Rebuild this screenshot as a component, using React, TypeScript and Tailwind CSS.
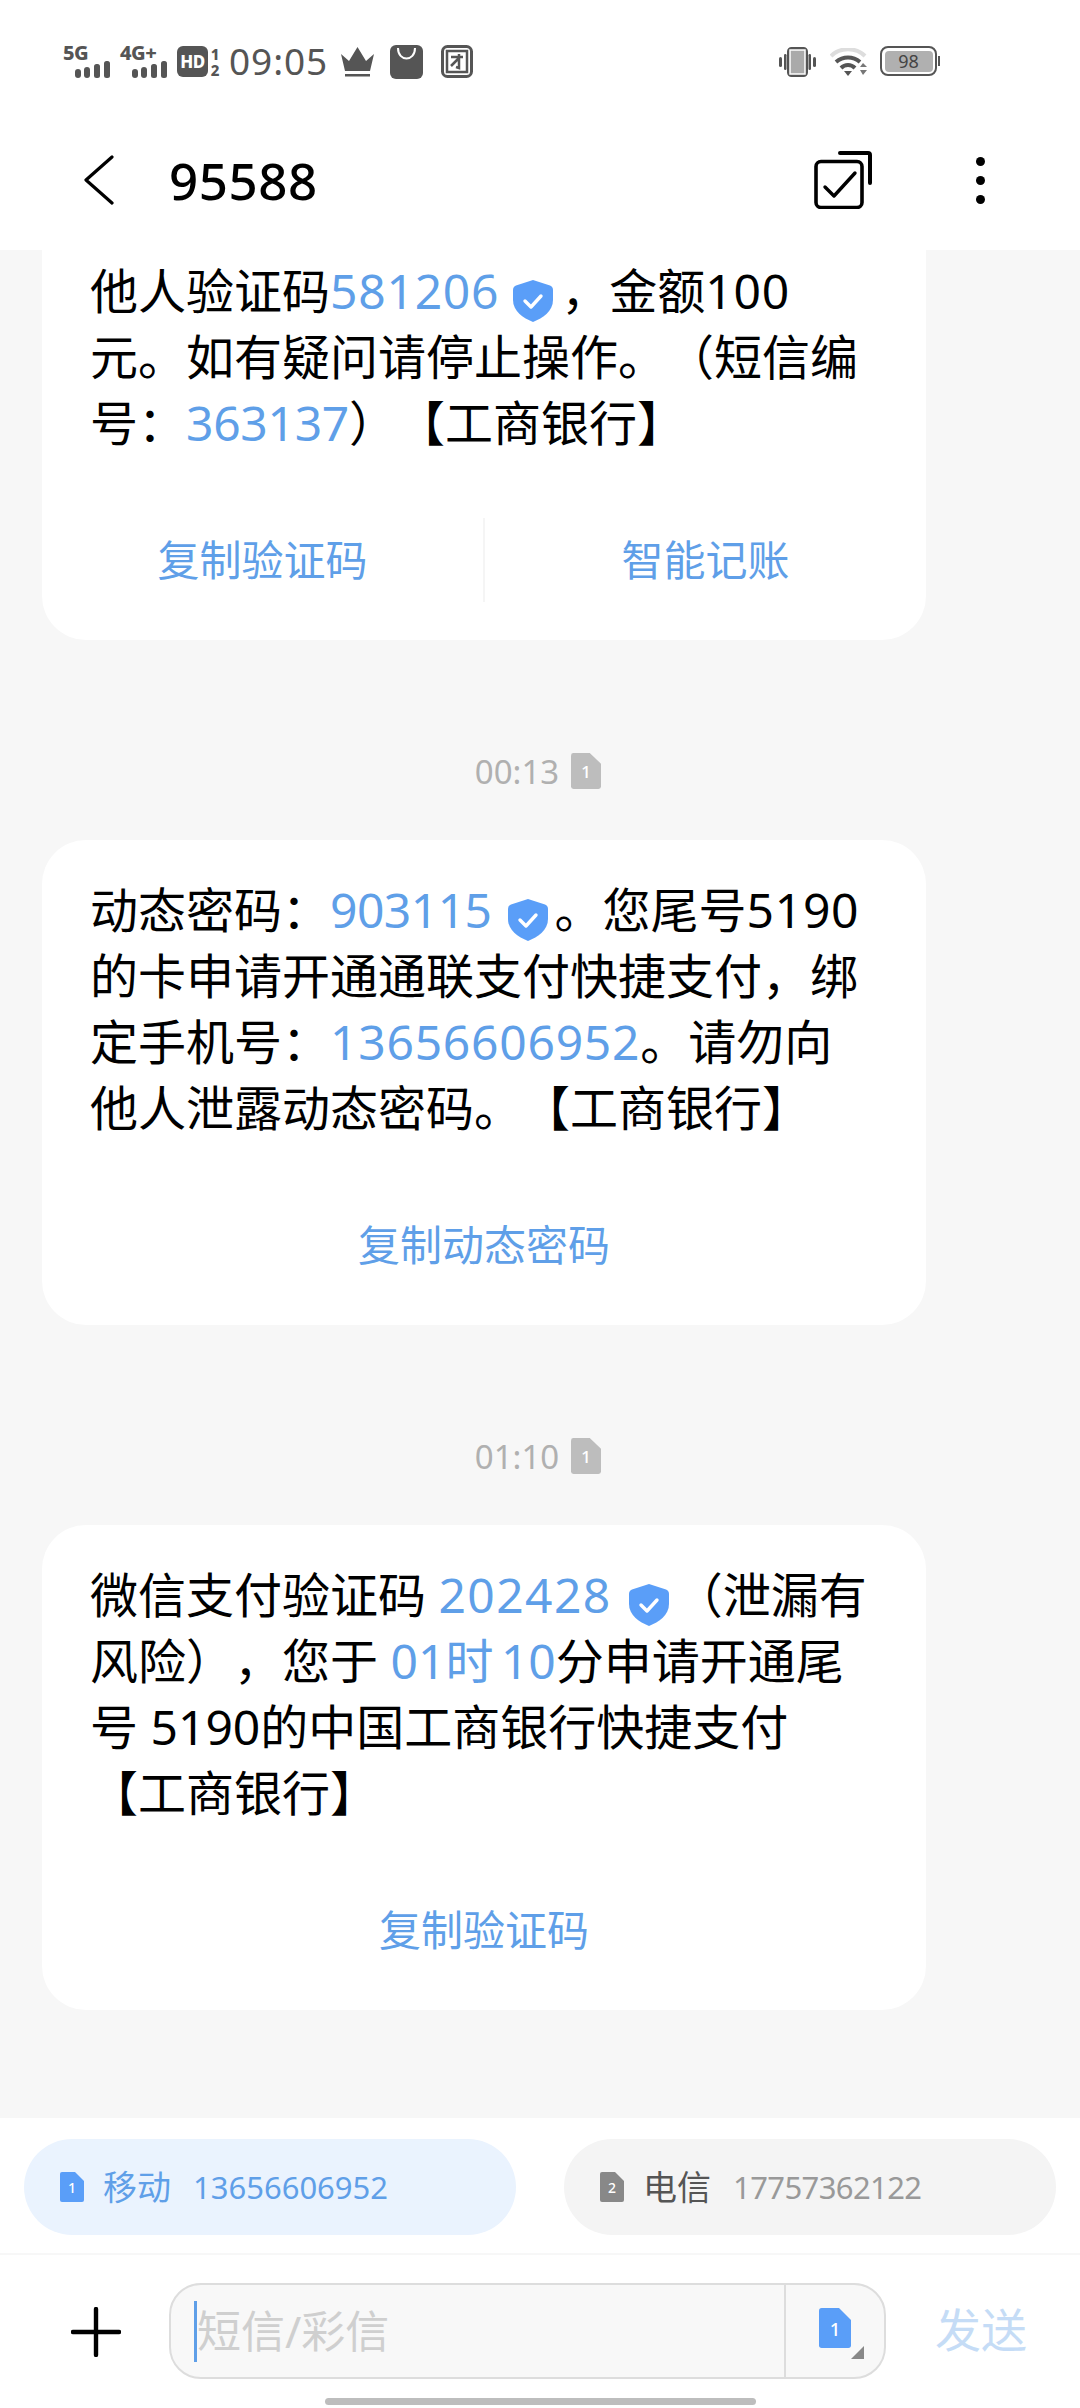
import type { ReactNode } from "react";

const BLUE_TEXT = "text-[#5f9fe8]";

function Blue({ children, className = "tracking-[0.75px]" }: { children: ReactNode; className?: string }) {
  return <span className={`${className} ${BLUE_TEXT}`}>{children}</span>;
}

function Num({ children }: { children: ReactNode }) {
  return <span className="tracking-[0.75px]">{children}</span>;
}

function Shield({ className = "mr-[6px] ml-[17px]" }: { className?: string }) {
  return (
    <svg viewBox="0 0 40 42" className={`inline-block h-[42px] w-[40px] align-[-13px] ${className}`}>
      <path
        d="M20 0 L37 5.5 Q40 6.5 40 10 V20 C40 31 30 38 20 42 C10 38 0 31 0 20 V10 Q0 6.5 3 5.5 Z"
        fill="#5a9ef8"
      />
      <path d="M12 21 L18 27 L28 16" fill="none" stroke="#fff" strokeWidth="3.4" strokeLinecap="round" strokeLinejoin="round" />
    </svg>
  );
}

function SimIcon({ n, color, className }: { n: string; color: string; className: string }) {
  return (
    <svg viewBox="0 0 24 30" preserveAspectRatio="none" className={className}>
      <path d="M2 0 H15 L24 9 V28 Q24 30 22 30 H2 Q0 30 0 28 V2 Q0 0 2 0 Z" fill={color} />
      <text x="12" y="21" textAnchor="middle" fontSize="14" fontWeight="500" fill="#fff" fontFamily="Noto Sans, sans-serif">
        {n}
      </text>
    </svg>
  );
}

function SignalBars() {
  return (
    <svg viewBox="0 0 35 17" className="h-[17px] w-[35px]">
      <rect x="0" y="8" width="6" height="9" rx="3" fill="#555" />
      <rect x="9" y="6" width="6" height="11" rx="3" fill="#555" />
      <rect x="19" y="3" width="6" height="14" rx="2.5" fill="#555" />
      <rect x="29" y="0" width="6" height="17" rx="2.5" fill="#555" />
    </svg>
  );
}

function Signal({ label, width }: { label: string; width: string }) {
  return (
    <div className={`flex flex-col ${width}`}>
      <span className="h-[17px] text-[20px] leading-[17px] font-extrabold tracking-[-0.5px] text-[#555]">{label}</span>
      <div className="ml-auto">
        <SignalBars />
      </div>
    </div>
  );
}

function StatusBar() {
  return (
    <div className="flex h-[110px] items-start justify-between pt-[44px] pr-[140px] pl-[63px]">
      <div className="flex items-start">
        <Signal label="5G" width="w-[47px]" />
        <div className="ml-[10px]">
          <Signal label="4G+" width="w-[47px]" />
        </div>
        <div className="mt-[2px] ml-[10px] flex h-[31px] w-[31px] items-center justify-center rounded-[6px] bg-[#555] text-[17px] font-extrabold tracking-[-0.5px] text-white">
          HD
        </div>
        <div className="mt-[2px] ml-[2px] flex h-[32px] w-[10px] flex-col items-center text-[15px] leading-[16px] font-extrabold text-[#555]">
          <span>1</span>
          <span>2</span>
        </div>
        <span className="ml-[9px] text-[37px] leading-[34px] tracking-[0.9px] text-[#555]">09:05</span>
        <svg viewBox="0 0 33 30" className="mt-[3px] ml-[13px] h-[30px] w-[33px]">
          <path d="M0 7 L8 14 L16.5 0 L25 14 L33 7 L29 24 H4 Z" fill="#555" />
          <rect x="4" y="27" width="25" height="2.5" fill="#555" />
        </svg>
        <svg viewBox="0 0 33 34" className="mt-[1px] ml-[16px] h-[34px] w-[33px]">
          <rect width="33" height="34" rx="6" fill="#555" />
          <path d="M8 3 C8 17 25 17 25 3" fill="none" stroke="#fff" strokeWidth="2" />
        </svg>
        <svg viewBox="0 0 32 33" className="mt-[1px] ml-[18px] h-[33px] w-[32px]">
          <rect x="1.5" y="1.5" width="29" height="30" rx="5" fill="#fff" stroke="#555" strokeWidth="3" />
          <rect x="6" y="6" width="20" height="21" fill="#fff" stroke="#555" strokeWidth="2.5" />
          <path d="M10 12 H22 M18 9 V23 L15 22 M18 13 L10 21" fill="none" stroke="#555" strokeWidth="2.5" />
        </svg>
      </div>
      <div className="flex items-start">
        <svg viewBox="0 0 37 30" className="mt-[3px] h-[30px] w-[37px]">
          <rect x="9.5" y="1.5" width="18" height="27" rx="3" fill="#aaa" stroke="#555" strokeWidth="3" />
          <rect x="11" y="3" width="15" height="24" fill="none" stroke="#fff" strokeWidth="1.5" />
          <rect x="0" y="10" width="3" height="10" rx="1.5" fill="#555" />
          <rect x="5" y="7" width="2.5" height="16" rx="1.2" fill="#555" />
          <rect x="29.5" y="7" width="2.5" height="16" rx="1.2" fill="#555" />
          <rect x="34" y="10" width="3" height="10" rx="1.5" fill="#555" />
        </svg>
        <svg viewBox="0 0 38 28" className="mt-[4px] ml-[14px] h-[28px] w-[38px]">
          <path d="M1 8 C10 -1 26 -1 35 8" fill="none" stroke="#ddd" strokeWidth="4" />
          <path d="M6 14 C13 8 23 8 30 14" fill="none" stroke="#555" strokeWidth="4" />
          <path d="M11 20 C15 16 21 16 25 20" fill="none" stroke="#555" strokeWidth="4" />
          <path d="M14 23 H22 L18 28 Z" fill="#555" />
          <path d="M30 19 L33 15 L37 19 Z M30 22 H37 L33 27 Z" fill="#777" />
        </svg>
        <div className="mt-[2px] ml-[12px] flex items-center">
          <div className="flex h-[30px] w-[57px] items-center justify-center rounded-[8px] border-[2.5px] border-[#555] p-[2.5px]">
            <div className="flex h-full w-full items-center justify-center rounded-[4px] bg-[#b0b0b0] text-[18px] leading-none text-[#444]">
              98
            </div>
          </div>
          <div className="ml-[1px] h-[10px] w-[2px] bg-[#555]" />
        </div>
      </div>
    </div>
  );
}

function Header() {
  return (
    <div className="flex h-[140px] items-center pr-[95px] pl-[84px]">
      <svg viewBox="0 0 30 50" className="h-[50px] w-[30px]">
        <path d="M28 2 L2 25 L28 48" fill="none" stroke="#000" strokeWidth="3.2" strokeLinecap="round" strokeLinejoin="round" />
      </svg>
      <span className="ml-[55px] text-[51px] leading-none font-medium tracking-[0.6px] text-black">95588</span>
      <svg viewBox="0 0 58 58" className="mt-[-1px] ml-auto h-[58px] w-[58px]">
        <path d="M26 2 H54 Q56 2 56 4 V32" fill="none" stroke="#000" strokeWidth="4" strokeLinecap="round" />
        <rect x="2" y="10.5" width="46" height="46" rx="5" fill="#fff" stroke="#000" strokeWidth="3.6" />
        <path d="M11 36 L20 45 L41 22" fill="none" stroke="#000" strokeWidth="3.4" strokeLinecap="round" strokeLinejoin="round" />
      </svg>
      <div className="ml-[104px] flex flex-col gap-[10px]">
        <div className="size-[9px] rounded-full bg-black" />
        <div className="size-[9px] rounded-full bg-black" />
        <div className="size-[9px] rounded-full bg-black" />
      </div>
    </div>
  );
}

function Time({ value }: { value: string }) {
  return (
    <div className="mt-[113px] mb-[51px] flex h-[36px] items-center justify-center pr-[4px]">
      <span className="text-[33px] leading-none text-[#b0b0b0]">{value}</span>
      <SimIcon n="1" color="#bdbdbd" className="ml-[12px] h-[36px] w-[30px]" />
    </div>
  );
}

function Card({ lines, actions, clipped }: { lines: ReactNode[]; actions: string[]; clipped?: boolean }) {
  return (
    <div className={`ml-[42px] w-[884px] rounded-[44px] bg-white pb-[38px] ${clipped ? "pt-[90px]" : "pt-[37px]"}`}>
      <div className="pl-[48px] text-[48px] leading-[66px] whitespace-nowrap text-black [text-spacing-trim:space-all]">
        {lines.map((line, i) => (
          <div key={i}>{line}</div>
        ))}
      </div>
      <div className="mt-[62px] flex h-[84px]">
        {actions.map((action, i) => (
          <div
            key={action}
            className={`flex flex-1 items-center justify-center text-[42px] leading-none ${BLUE_TEXT} ${i > 0 ? "border-l-2 border-[#f5f5f5]" : ""}`}
          >
            {action}
          </div>
        ))}
      </div>
    </div>
  );
}

function SimPill({ n, name, phone, active }: { n: string; name: string; phone: string; active?: boolean }) {
  return (
    <div className={`flex h-[96px] w-[492px] items-center rounded-full pl-[36px] ${active ? "bg-[#eaf3fe]" : "bg-[#f4f4f4]"}`}>
      <SimIcon n={n} color={active ? "#5a9ef8" : "#888888"} className="h-[30px] w-[24px]" />
      <span className={`ml-[19px] text-[34px] leading-none ${active ? "text-[#5f9fe8]" : "text-[#555]"}`}>{name}</span>
      <span className={`ml-[22px] text-[31px] leading-none ${active ? "text-[#5f9fe8]" : "tracking-[-0.6px] text-[#999]"}`}>{phone}</span>
    </div>
  );
}

function Composer() {
  return (
    <div className="flex h-[155px] items-start border-t-2 border-[#f7f7f7] pt-[28px]">
      <svg viewBox="0 0 50 50" className="mt-[24px] ml-[71px] h-[50px] w-[50px]">
        <path d="M2 25 H48 M25 2 V48" stroke="#000" strokeWidth="4.4" strokeLinecap="round" />
      </svg>
      <div className="ml-[48px] flex h-[96px] w-[717px] rounded-[32px] border-2 border-[#dddddd] bg-[#f8f8f8]">
        <div className="flex flex-1 items-center pl-[23px]">
          <div className="h-[61px] w-[3px] bg-[#5f9fe8]" />
          <span className="text-[44px] leading-none text-[#cfcfcf]">短信/彩信</span>
        </div>
        <div className="flex w-[100px] border-l-2 border-[#dddddd] pt-[23px] pl-[33px]">
          <SimIcon n="1" color="#5a9ef8" className="h-[40px] w-[32px]" />
          <div className="mt-[38px] h-[13px] w-[13px] bg-[#888] [clip-path:polygon(100%_0,100%_100%,0_100%)]" />
        </div>
      </div>
      <span className="mt-[23px] ml-[49px] text-[46px] leading-none text-[#c5dcf6]">发送</span>
    </div>
  );
}

export default function App() {
  return (
    <div className="relative flex h-[2408px] w-[1080px] flex-col overflow-hidden bg-white [font-family:'Noto_Sans','Noto_Sans_CJK_SC',sans-serif]">
      <StatusBar />
      <Header />

      <div className="flex min-h-0 flex-1 flex-col justify-end overflow-hidden bg-[#f7f7f7] pb-[108px]">
        <Card
          clipped
          lines={[
            <>他人验证码<Blue>581206</Blue><Shield className="mr-[8px] ml-[14px]" />，金额<Num>100</Num></>,
            <>元。如有疑问请停止操作。（短信编</>,
            <>号：<Blue className="tracking-[-0.3px]">363137</Blue>）【工商银行】</>,
          ]}
          actions={["复制验证码", "智能记账"]}
        />
        <Time value="00:13" />
        <Card
          lines={[
            <>动态密码：<Blue className="tracking-[-0.55px]">903115</Blue><Shield />。您尾号<Num>5190</Num></>,
            <>的卡申请开通通联支付快捷支付，绑</>,
            <>定手机号：<Blue>13656606952</Blue>。请勿向</>,
            <>他人泄露动态密码。【工商银行】</>,
          ]}
          actions={["复制动态密码"]}
        />
        <Time value="01:10" />
        <Card
          lines={[
            <>微信支付验证码 <Blue className="tracking-[1.4px]">202428</Blue><Shield />（泄漏有</>,
            <>风险），您于 <Blue className="[word-spacing:-5px]">01时 10</Blue>分申请开通尾</>,
            <>号 5190的中国工商银行快捷支付</>,
            <>【工商银行】</>,
          ]}
          actions={["复制验证码"]}
        />
      </div>

      <div className="flex h-[135px] items-start justify-between px-[24px] pt-[21px]">
        <SimPill n="1" name="移动" phone="13656606952" active />
        <SimPill n="2" name="电信" phone="17757362122" />
      </div>
      <Composer />
      <div className="absolute top-[2398px] left-[325px] h-[7px] w-[431px] rounded-full bg-[#bdbdbd]" />
    </div>
  );
}
